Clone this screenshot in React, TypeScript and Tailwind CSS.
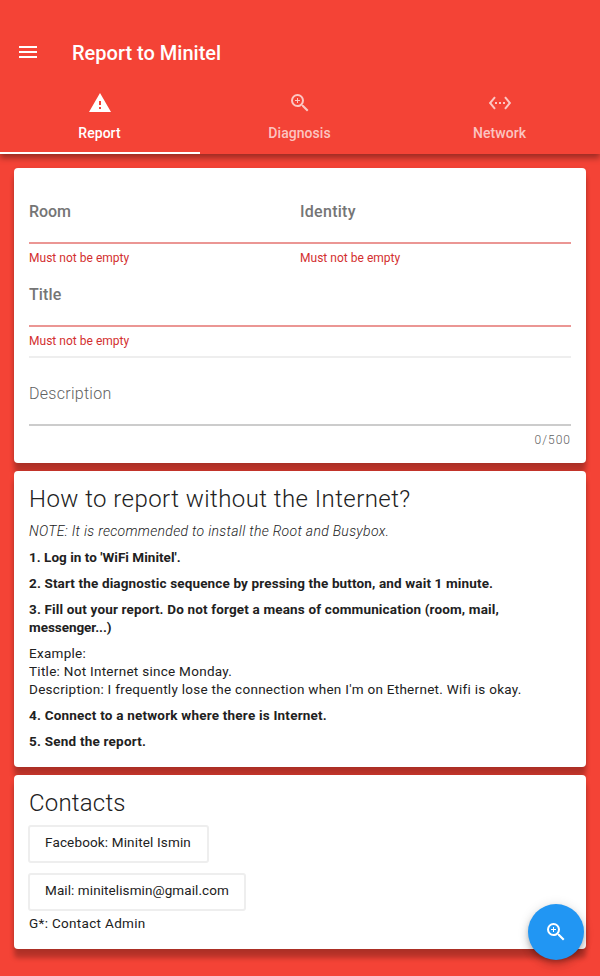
import type { ReactNode } from "react";
import { MdMenu, MdSettingsEthernet, MdWarning, MdZoomIn } from "react-icons/md";

function Tab({ icon, label, active = false }: { icon: ReactNode; label: string; active?: boolean }) {
  return (
    <div
      className={
        active
          ? "flex h-[74px] flex-1 flex-col items-center border-b-2 border-white pt-[11px] text-white"
          : "flex h-[74px] flex-1 flex-col items-center border-b-2 border-transparent pt-[11px] text-white/70"
      }
    >
      {icon}
      <span className="mt-2 -ml-px text-sm leading-5 font-medium tracking-[0.04px]">{label}</span>
    </div>
  );
}

function Card({ className, children }: { className: string; children: ReactNode }) {
  return (
    <section
      className={`relative rounded-[4px] bg-white px-[15px] shadow-[0_9px_5px_0_rgba(0,0,0,0.25),0_1px_5px_0_rgba(0,0,0,0.1)] ${className}`}
    >
      {children}
    </section>
  );
}

function Field({ label, tracking }: { label: string; tracking: string }) {
  return (
    <div className="h-[83px] flex-1">
      <div className={`h-[42px] text-base leading-6 font-medium text-[#757575] ${tracking}`}>{label}</div>
      <div className="h-[2px] bg-[#eb9694]" />
      <div className="mt-[6px] text-xs leading-4 tracking-[0.02px] text-[#d32f2f]">Must not be empty</div>
    </div>
  );
}

export default function App() {
  return (
    <div className="relative h-[976px] w-[600px] overflow-hidden bg-[#f44336] font-['Roboto',sans-serif] text-[#212121]">
      <header className="relative z-10 h-[154px] bg-[#f44336] pt-6 text-white shadow-[0_4px_6px_0_rgba(0,0,0,0.36)]">
        <div className="flex h-14 items-center px-4">
          <MdMenu size={24} />
          <h1 className="ml-8 pt-px text-xl font-medium">Report to Minitel</h1>
        </div>
        <nav className="flex">
          <Tab active icon={<MdWarning size={24} />} label="Report" />
          <Tab icon={<MdZoomIn size={24} />} label="Diagnosis" />
          <Tab icon={<MdSettingsEthernet size={24} />} label="Network" />
        </nav>
      </header>

      <main className="flex flex-col gap-2 px-[14px] pt-[14px]">
        <Card className="h-[295px] pt-8">
          <div className="flex">
            <Field label="Room" tracking="tracking-[-0.1px]" />
            <Field label="Identity" tracking="tracking-[0.28px]" />
          </div>
          <Field label="Title" tracking="tracking-[0.1px]" />
          <div className="-mt-[10px] h-[2px] bg-[#eeeeee]" />
          <div className="mt-6 h-[42px] text-base leading-6 font-light tracking-[0.28px] text-[#616161]">Description</div>
          <div className="h-[2px] bg-[#cccccc]" />
          <div className="mt-[6px] text-right text-xs leading-4 font-light tracking-[1px] text-[#616161]">0/500</div>
        </Card>

        <Card className="h-[296px] pt-3">
          <h2 className="text-2xl leading-8 font-light tracking-[0.44px] whitespace-nowrap">How to report without the Internet?</h2>
          <div className="mt-[7px] text-[13.5px] leading-[18px] whitespace-nowrap">
            <p className="text-sm leading-[18px] font-light tracking-[0.31px] italic">NOTE: It is recommended to install the Root and Busybox.</p>
            <p className="mt-2 font-bold tracking-[0.03px]">1. Log in to 'WiFi Minitel'.</p>
            <p className="mt-2 font-bold tracking-[0.14px]">2. Start the diagnostic sequence by pressing the button, and wait 1 minute.</p>
            <p className="mt-2 font-bold tracking-[0.16px]">
              3. Fill out your report. Do not forget a means of communication (room, mail,
              <br />
              <span className="tracking-[-0.05px]">messenger...)</span>
            </p>
            <p className="mt-2 tracking-[0.28px]">
              Example:
              <br />
              Title: Not Internet since Monday.
              <br />
              Description: I frequently lose the connection when I'm on Ethernet. Wifi is okay.
            </p>
            <p className="mt-2 font-bold tracking-[0.21px]">4. Connect to a network where there is Internet.</p>
            <p className="mt-2 font-bold tracking-[0.22px]">5. Send the report.</p>
          </div>
        </Card>

        <Card className="h-[174px] pt-3">
          <h2 className="text-2xl leading-8 font-light tracking-[0.2px]">Contacts</h2>
          <div className="-ml-px text-[13.5px] leading-[18px] whitespace-nowrap">
            <button className="mt-[6px] flex h-[38px] w-[181px] items-center rounded-[3px] border-2 border-[#eeeeee] pb-1 pl-[15px] tracking-[0.15px]">Facebook: Minitel Ismin</button>
            <button className="mt-[10px] flex h-[38px] w-[218px] items-center rounded-[3px] border-2 border-[#eeeeee] pb-1 pl-[15px] tracking-[0.09px]">Mail: minitelismin@gmail.com</button>
            <p className="mt-[3px] ml-px tracking-[0.32px]">G*: Contact Admin</p>
          </div>
        </Card>
      </main>

      <button className="absolute right-4 bottom-4 flex size-14 items-center justify-center rounded-full bg-[#2196f3] text-white shadow-[0_3px_5px_-1px_rgba(0,0,0,0.2),0_6px_10px_0_rgba(0,0,0,0.14),0_1px_12px_0_rgba(0,0,0,0.12)]">
        <MdZoomIn size={24} />
      </button>
    </div>
  );
}
